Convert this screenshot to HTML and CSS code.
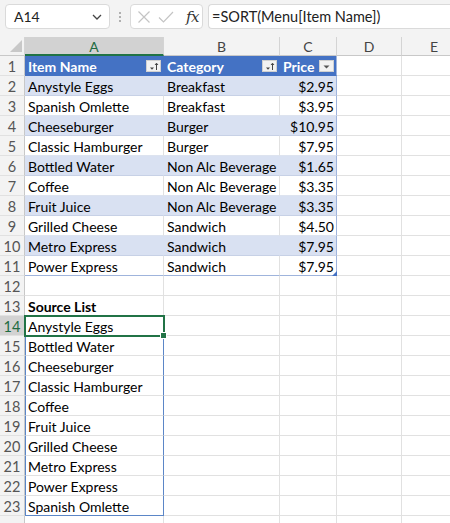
FILE: index.html
```html
<!DOCTYPE html>
<html>
<head>
<meta charset="utf-8">
<link rel="stylesheet" href="styles.css">
</head>
<body>
<div class="fbar">
  <div class="namebox"><span class="ref">A14</span>
    <svg class="chev" width="10" height="6" viewBox="0 0 10 6"><path d="M1 1 L5 5 L9 1" fill="none" stroke="#444" stroke-width="1.3"/></svg>
  </div>
  <div class="dots"><span></span><span></span><span></span></div>
  <div class="fxbox">
    <svg width="14" height="14" viewBox="0 0 14 14"><path d="M1.5 1.5 L12.5 12.5 M12.5 1.5 L1.5 12.5" stroke="#c4c4c4" stroke-width="1.2" fill="none"/></svg>
    <svg width="16" height="14" viewBox="0 0 16 14"><path d="M1 7.5 L5.5 12 L15 2" stroke="#c4c4c4" stroke-width="1.2" fill="none"/></svg>
    <span class="fx">fx</span>
  </div>
  <div class="formula">=SORT(Menu[Item Name])</div>
</div>
<div class="sheet">
  <div class="corner"><svg width="12" height="12" viewBox="0 0 12 12"><path d="M12 0 L12 12 L0 12 Z" fill="#c8c8c8"/></svg></div>
  <div class="ch sel">A</div><div class="ch">B</div><div class="ch">C</div><div class="ch">D</div><div class="ch">E</div>

  <div class="rh">1</div>
  <div class="c th">Item Name<span class="fbtn"><svg width="13" height="11" viewBox="0 0 13 11"><path d="M3 6.5 L7 6.5 L5 8.8 Z" fill="#444"/><path d="M9.5 9 L9.5 2.5" stroke="#444" stroke-width="1"/><path d="M8 4 L9.5 2.2 L11 4" stroke="#444" stroke-width="1" fill="none"/></svg></span></div>
  <div class="c th">Category<span class="fbtn"><svg width="13" height="11" viewBox="0 0 13 11"><path d="M3 6.5 L7 6.5 L5 8.8 Z" fill="#444"/><path d="M9.5 9 L9.5 2.5" stroke="#444" stroke-width="1"/><path d="M8 4 L9.5 2.2 L11 4" stroke="#444" stroke-width="1" fill="none"/></svg></span></div>
  <div class="c th tr">Price<span class="fbtn"><svg width="13" height="11" viewBox="0 0 13 11"><path d="M3.5 4.5 L9.5 4.5 L6.5 7.5 Z" fill="#555"/></svg></span></div>
  <div class="c"></div><div class="c"></div>

  <div class="rh">2</div><div class="c b">Anystyle Eggs</div><div class="c b">Breakfast</div><div class="c b n tr">$2.95</div><div class="c"></div><div class="c"></div>
  <div class="rh">3</div><div class="c t">Spanish Omlette</div><div class="c t">Breakfast</div><div class="c t n tr">$3.95</div><div class="c"></div><div class="c"></div>
  <div class="rh">4</div><div class="c b">Cheeseburger</div><div class="c b">Burger</div><div class="c b n tr">$10.95</div><div class="c"></div><div class="c"></div>
  <div class="rh">5</div><div class="c t">Classic Hamburger</div><div class="c t">Burger</div><div class="c t n tr">$7.95</div><div class="c"></div><div class="c"></div>
  <div class="rh">6</div><div class="c b">Bottled Water</div><div class="c b">Non Alc Beverage</div><div class="c b n tr">$1.65</div><div class="c"></div><div class="c"></div>
  <div class="rh">7</div><div class="c t">Coffee</div><div class="c t">Non Alc Beverage</div><div class="c t n tr">$3.35</div><div class="c"></div><div class="c"></div>
  <div class="rh">8</div><div class="c b">Fruit Juice</div><div class="c b">Non Alc Beverage</div><div class="c b n tr">$3.35</div><div class="c"></div><div class="c"></div>
  <div class="rh">9</div><div class="c t">Grilled Cheese</div><div class="c t">Sandwich</div><div class="c t n tr">$4.50</div><div class="c"></div><div class="c"></div>
  <div class="rh">10</div><div class="c b">Metro Express</div><div class="c b">Sandwich</div><div class="c b n tr">$7.95</div><div class="c"></div><div class="c"></div>
  <div class="rh">11</div><div class="c t tb">Power Express</div><div class="c t tb">Sandwich</div><div class="c t n tr tb">$7.95<span class="rsz"></span></div><div class="c"></div><div class="c"></div>

  <div class="rh">12</div><div class="c"></div><div class="c"></div><div class="c"></div><div class="c"></div><div class="c"></div>
  <div class="rh">13</div><div class="c bold">Source List</div><div class="c"></div><div class="c"></div><div class="c"></div><div class="c"></div>
  <div class="rh rsel">14</div><div class="c sp">Anystyle Eggs</div><div class="c"></div><div class="c"></div><div class="c"></div><div class="c"></div>
  <div class="rh">15</div><div class="c sp">Bottled Water</div><div class="c"></div><div class="c"></div><div class="c"></div><div class="c"></div>
  <div class="rh">16</div><div class="c sp">Cheeseburger</div><div class="c"></div><div class="c"></div><div class="c"></div><div class="c"></div>
  <div class="rh">17</div><div class="c sp">Classic Hamburger</div><div class="c"></div><div class="c"></div><div class="c"></div><div class="c"></div>
  <div class="rh">18</div><div class="c sp">Coffee</div><div class="c"></div><div class="c"></div><div class="c"></div><div class="c"></div>
  <div class="rh">19</div><div class="c sp">Fruit Juice</div><div class="c"></div><div class="c"></div><div class="c"></div><div class="c"></div>
  <div class="rh">20</div><div class="c sp">Grilled Cheese</div><div class="c"></div><div class="c"></div><div class="c"></div><div class="c"></div>
  <div class="rh">21</div><div class="c sp">Metro Express</div><div class="c"></div><div class="c"></div><div class="c"></div><div class="c"></div>
  <div class="rh">22</div><div class="c sp">Power Express</div><div class="c"></div><div class="c"></div><div class="c"></div><div class="c"></div>
  <div class="rh">23</div><div class="c sp spl">Spanish Omlette</div><div class="c"></div><div class="c"></div><div class="c"></div><div class="c"></div>
  <div class="rh"></div><div class="c"></div><div class="c"></div><div class="c"></div><div class="c"></div><div class="c"></div>

  <div class="selbox"><span class="handle"></span></div>
</div>
</body>
</html>
```

FILE: styles.css
```css
body {
  margin: 0;
  width: 450px;
  height: 523px;
  overflow: hidden;
  background: #ffffff;
  font-family: Lato, "Open Sans", sans-serif;
  color: #000;
}

.fbar {
  height: 37px;
  box-sizing: border-box;
  background: #f3f3f3;
  display: flex;
  align-items: flex-start;
  padding: 4px 0 0 5px;
}
.fbar > * {
  flex: none;
}

.namebox {
  width: 105px;
  height: 25px;
  box-sizing: border-box;
  background: #fff;
  border: 1px solid #dadada;
  border-radius: 4px;
  display: flex;
  align-items: center;
  justify-content: space-between;
  padding: 0 7px 0 8px;
  font-size: 14px;
  color: #222;
}

.dots {
  width: 20px;
  height: 25px;
  display: flex;
  flex-direction: column;
  align-items: center;
  justify-content: center;
  gap: 2px;
}
.dots span {
  width: 2px;
  height: 2px;
  background: #9a9a9a;
  border-radius: 1px;
}

.fxbox {
  width: 73px;
  height: 25px;
  box-sizing: border-box;
  background: #fff;
  border: 1px solid #dadada;
  border-radius: 4px;
  display: flex;
  align-items: center;
  gap: 7px;
  padding-left: 6px;
}
.fx {
  font-family: "DejaVu Serif", "Liberation Serif", serif;
  font-style: italic;
  font-size: 15px;
  color: #333;
  margin-left: 5px;
  letter-spacing: -0.5px;
}

.formula {
  margin-left: 5px;
  width: 260px;
  height: 25px;
  box-sizing: border-box;
  background: #fff;
  border: 1px solid #dadada;
  border-right: none;
  border-radius: 4px 0 0 4px;
  padding-left: 3px;
  line-height: 23px;
  font-size: 14.5px;
  color: #222;
  white-space: nowrap;
}

.sheet {
  position: relative;
  display: grid;
  grid-template-columns: 25px 139px 116px 57px 65px 65px;
  grid-template-rows: 19px;
  grid-auto-rows: 20px;
  width: 467px;
}

.corner {
  background: #f3f3f3;
  border-right: 1px solid #d4d4d4;
  border-bottom: 1px solid #c8c8c8;
  display: flex;
  align-items: flex-end;
  justify-content: flex-end;
  padding: 0 2px 3px 0;
  box-sizing: border-box;
}

.ch {
  background: #f3f3f3;
  border-right: 1px solid #d4d4d4;
  border-bottom: 1px solid #c8c8c8;
  box-sizing: border-box;
  text-align: center;
  font-size: 14px;
  line-height: 19px;
  color: #444;
}
.ch.sel {
  background: #d2d2d2;
  color: #1e6b41;
  border-bottom: 2px solid #217346;
}

.rh {
  background: #f3f3f3;
  border-right: 1px solid #c8c8c8;
  border-bottom: 1px solid #e1e1e1;
  box-sizing: border-box;
  text-align: center;
  font-size: 14.5px;
  line-height: 19px;
  padding-top: 1px;
  color: #555;
}
.rh.rsel {
  background: #d2d2d2;
  color: #1e6b41;
}

.c {
  border-right: 1px solid #e1e1e1;
  border-bottom: 1px solid #e1e1e1;
  box-sizing: border-box;
  padding: 1px 3px 0;
  font-size: 14px;
  line-height: 19px;
  white-space: nowrap;
  overflow: hidden;
}

.c.th {
  background: #4472c4;
  color: #fff;
  font-weight: 700;
  border-right-color: #4472c4;
  border-bottom-color: #4472c4;
  display: flex;
  align-items: center;
  justify-content: space-between;
  padding-right: 2px;
}
.fbtn {
  width: 15px;
  height: 12px;
  background: #f2f2f2;
  border: 1px solid #d0d0d0;
  box-sizing: border-box;
  display: flex;
  align-items: center;
  justify-content: center;
  flex: none;
}

.c.b {
  background: #d9e1f2;
  border-right-color: #d9e1f2;
  border-bottom-color: #c7d1e6;
}
.c.t {
  border-bottom-color: #dde3ef;
}
.c.n {
  text-align: right;
  padding-right: 2px;
}
.c.tr {
  border-right: 1px solid #9fb4dc;
}
.c.tb {
  border-bottom: 1px solid #9fb4dc;
  position: relative;
  overflow: visible;
}
.rsz {
  position: absolute;
  right: -1px;
  bottom: -1px;
  width: 0;
  height: 0;
  border-left: 5px solid transparent;
  border-bottom: 5px solid #4472c4;
}

.bold {
  font-weight: 700;
}

.c.sp {
  border-left: 1px solid #5b86c7;
  border-right: 1px solid #5b86c7;
  padding-left: 2px;
}
.c.spl {
  border-bottom: 1px solid #5b86c7;
}

.selbox {
  position: absolute;
  left: 24px;
  top: 278px;
  width: 141px;
  height: 22px;
  box-sizing: border-box;
  border: 2px solid #217346;
}
.handle {
  position: absolute;
  right: -4px;
  bottom: -4px;
  width: 5px;
  height: 5px;
  background: #217346;
  border: 1px solid #fff;
}
```
